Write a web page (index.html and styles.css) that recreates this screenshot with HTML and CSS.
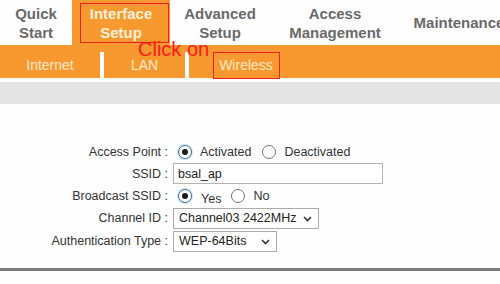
FILE: index.html
```html
<!DOCTYPE html>
<html>
<head>
<meta charset="utf-8">
<link rel="stylesheet" href="styles.css">
</head>
<body>
<div class="page">
  <div class="tabs">
    <div class="tab t1">Quick<br>Start</div>
    <div class="tab t2 active">Interface<br>Setup</div>
    <div class="tab t3">Advanced<br>Setup</div>
    <div class="tab t4">Access<br>Management</div>
    <div class="tab t5">Maintenance</div>
  </div>
  <div class="subbar">
    <div class="sub s1">Internet</div>
    <div class="sep"></div>
    <div class="sub s2">LAN</div>
    <div class="sep"></div>
    <div class="sub s3">Wireless</div>
  </div>
  <div class="band"></div>

  <div class="form">
    <div class="label">Access Point :</div>
    <div class="ctrl">
      <span class="radio checked"></span><span class="rtext">Activated</span>
      <span class="radio r2"></span><span class="rtext">Deactivated</span>
    </div>

    <div class="label">SSID :</div>
    <div class="ctrl"><div class="input">bsal_ap</div></div>

    <div class="label">Broadcast SSID :</div>
    <div class="ctrl">
      <span class="radio checked"></span><span class="rtext low">Yes</span>
      <span class="radio r3"></span><span class="rtext">No</span>
    </div>

    <div class="label">Channel ID :</div>
    <div class="ctrl">
      <div class="select sel1"><span>Channel03 2422MHz</span>
        <svg class="chev" width="9" height="6" viewBox="0 0 9 6"><path d="M1 1 L4.5 4.5 L8 1" fill="none" stroke="#333" stroke-width="1.6"/></svg>
      </div>
    </div>

    <div class="label">Authentication Type :</div>
    <div class="ctrl">
      <div class="select sel2"><span>WEP-64Bits</span>
        <svg class="chev" width="9" height="6" viewBox="0 0 9 6"><path d="M1 1 L4.5 4.5 L8 1" fill="none" stroke="#333" stroke-width="1.6"/></svg>
      </div>
    </div>
  </div>

  <div class="rule"></div>

  <div class="mark box1"></div>
  <div class="clickon">Click on</div>
  <div class="mark box2"></div>
</div>
</body>
</html>
```

FILE: styles.css
```css
html, body {
  margin: 0;
  padding: 0;
  background: #fefefe;
}
body {
  width: 500px;
  height: 284px;
  overflow: hidden;
  font-family: "Liberation Sans", Arial, sans-serif;
}
.page {
  position: relative;
  width: 500px;
  height: 284px;
  overflow: hidden;
}
.tabs {
  display: flex;
  height: 45px;
  width: 560px;
}
.tab {
  display: flex;
  flex-direction: column;
  justify-content: center;
  align-items: center;
  text-align: center;
  font-weight: bold;
  font-size: 15px;
  line-height: 19px;
  color: #6a6a6a;
  white-space: nowrap;
}
.t1 { width: 72px; }
.t2 { width: 98px; }
.t3 { width: 100px; }
.t4 { width: 130px; }
.t5 { width: 118px; }
.tab.active {
  background: #f8992f;
  color: #fdf0dc;
}
.subbar {
  display: flex;
  height: 26px;
  padding-top: 7px;
  background: #f8992f;
}
.sub {
  display: flex;
  align-items: center;
  justify-content: center;
  font-size: 14px;
  color: #fde8cc;
}
.s1 { width: 100px; }
.s2 { width: 81px; }
.s3 { width: 114px; }
.sep {
  width: 4px;
  background: #fefefe;
}
.band {
  margin-top: 4px;
  height: 22px;
  background: #e4e4e4;
}
.form {
  display: grid;
  grid-template-columns: 168px 1fr;
  grid-template-rows: 20px 23px 22px 22px 24px;
  column-gap: 5px;
  margin-top: 38px;
  font-size: 12.5px;
  color: #333;
}
.label {
  display: flex;
  align-items: center;
  justify-content: flex-end;
  white-space: nowrap;
}
.ctrl {
  display: flex;
  align-items: center;
}
.radio {
  width: 12px;
  height: 12px;
  border: 1px solid #707070;
  border-radius: 50%;
  background: #fff;
  display: inline-flex;
  align-items: center;
  justify-content: center;
  margin-left: 5px;
  flex: none;
}
.radio.checked {
  border-color: #3f6f99;
  box-shadow: 0 0 0 1px #cfe3f3;
}
.radio.checked::after {
  content: "";
  width: 6px;
  height: 6px;
  border-radius: 50%;
  background: #1a1a1a;
}
.r2 { margin-left: 11px; }
.r3 { margin-left: 10px; }
.rtext {
  margin-left: 8px;
  color: #333;
}
.rtext.low {
  position: relative;
  top: 3px;
  margin-left: 9px;
}
.input {
  width: 204px;
  height: 19px;
  border: 1px solid #b5b5b5;
  display: flex;
  align-items: center;
  padding-left: 4px;
  color: #222;
  background: #fff;
}
.select {
  height: 19px;
  border: 1px solid #ababab;
  display: flex;
  align-items: center;
  justify-content: space-between;
  padding: 0 6px 0 5px;
  color: #222;
  background: #fff;
  box-sizing: content-box;
}
.sel1 { width: 133px; }
.sel2 { width: 91px; }
.chev { margin-top: 2px; }
.rule {
  margin-top: 15px;
  height: 3px;
  background: #7b7b7b;
}
.mark {
  position: absolute;
  border: 1px solid #ee1f1f;
}
.box1 {
  left: 80px;
  top: 3px;
  width: 87px;
  height: 38px;
}
.box2 {
  left: 213px;
  top: 52px;
  width: 65px;
  height: 25px;
}
.clickon {
  position: absolute;
  left: 138px;
  top: 38px;
  font-size: 20px;
  line-height: 22px;
  color: #ff1a1a;
  font-family: "Liberation Sans", Arial, sans-serif;
}
```
